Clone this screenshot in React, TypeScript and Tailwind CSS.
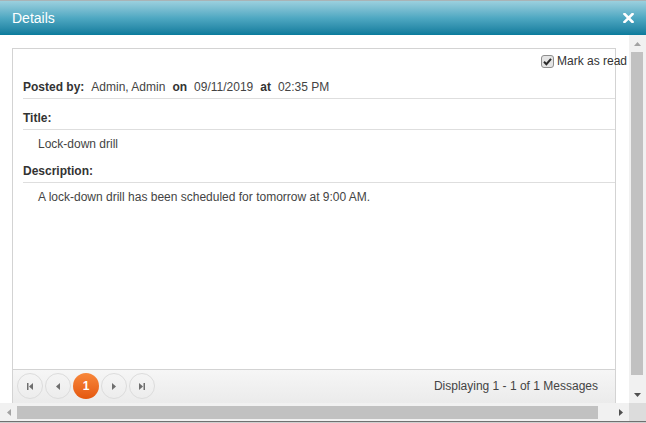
import React from 'react';

function Tri({ dir, color }: { dir: 'up' | 'down' | 'left' | 'right'; color: string }) {
    const pts = {
        up: '0,4 7,4 3.5,0',
        down: '0,0 7,0 3.5,4',
        left: '4,0 4,7 0,3.5',
        right: '0,0 0,7 4,3.5',
    }[dir];
    const w = dir === 'up' || dir === 'down' ? 7 : 4;
    const h = dir === 'up' || dir === 'down' ? 4 : 7;
    return (
        <svg width={w} height={h} viewBox={`0 0 ${w} ${h}`}>
            <polygon points={pts} fill={color} />
        </svg>
    );
}

function PagerIcon({ kind }: { kind: 'first' | 'prev' | 'next' | 'last' }) {
    const c = '#6e6e6e';
    return (
        <svg width="10" height="9" viewBox="0 0 10 9">
            {kind === 'first' && (
                <>
                    <rect x="2" y="1" width="1.5" height="7" fill={c} />
                    <polygon points="8,1 8,8 4,4.5" fill={c} />
                </>
            )}
            {kind === 'prev' && <polygon points="7,1 7,8 3,4.5" fill={c} />}
            {kind === 'next' && <polygon points="3,1 3,8 7,4.5" fill={c} />}
            {kind === 'last' && (
                <>
                    <polygon points="2,1 2,8 6,4.5" fill={c} />
                    <rect x="6.5" y="1" width="1.5" height="7" fill={c} />
                </>
            )}
        </svg>
    );
}

function PagerBtn({ kind }: { kind: 'first' | 'prev' | 'next' | 'last' }) {
    return (
        <div className="w-[26px] h-[26px] rounded-full border border-[#dcdcdc] flex items-center justify-center">
            <PagerIcon kind={kind} />
        </div>
    );
}

export default function App() {
    return (
        <div className="w-[646px] h-[423px] flex flex-col bg-white overflow-hidden font-['Liberation_Sans',Arial,sans-serif] text-[12px] text-[#333]">
            {/* title bar */}
            <div className="h-[35px] shrink-0 flex items-center justify-between pl-[12px] pr-[12px] border-t border-[#a9b3b6] bg-linear-to-b from-[#9bd0de] via-[#4ea8c2] to-[#087b9c]">
                <span className="text-white text-[14px] leading-none">Details</span>
                <svg width="11" height="10" viewBox="0 0 11 10">
                    <path d="M1.5 1 L9.5 9 M9.5 1 L1.5 9" stroke="#fff" strokeWidth="2.6" strokeLinecap="square" />
                </svg>
            </div>

            {/* body */}
            <div className="flex flex-1 min-h-0">
                <div className="flex-1 overflow-hidden pl-[12px] pt-[13px]">
                    <div className="w-[604px] border border-[#d3d3d3]">
                        <div className="h-[320px] pl-[10px]">
                            <div className="flex justify-end items-center gap-[3px] pt-[6px] -mr-[12px]">
                                <svg width="13" height="13" viewBox="0 0 13 13">
                                    <rect x="0.5" y="0.5" width="12" height="12" rx="2.5" fill="#e4e4e4" stroke="#8e8e8e" />
                                    <path d="M3 6.8 L5.4 9.2 L10 3.8" stroke="#2b2b2b" strokeWidth="2" fill="none" />
                                </svg>
                                <span className="leading-[13px] text-[#333]">Mark as read</span>
                            </div>
                            <div className="mt-[12px] pb-[4px] leading-[14px] border-b border-[#dedede] flex gap-[7px] whitespace-nowrap">
                                <span className="font-bold">Posted by:</span>
                                <span className="text-[#444]">Admin, Admin</span>
                                <span className="font-bold">on</span>
                                <span className="text-[#444]">09/11/2019</span>
                                <span className="font-bold">at</span>
                                <span className="text-[#444]">02:35 PM</span>
                            </div>
                            <div className="mt-[12px] pb-[4px] leading-[14px] border-b border-[#dedede] font-bold">Title:</div>
                            <div className="mt-[7px] pl-[15px] leading-[14px] text-[#444]">Lock-down drill</div>
                            <div className="mt-[13px] pb-[4px] leading-[14px] border-b border-[#dedede] font-bold">Description:</div>
                            <div className="mt-[7px] pl-[15px] leading-[14px] text-[#444]">
                                A lock-down drill has been scheduled for tomorrow at 9:00 AM.
                            </div>
                        </div>
                        {/* pager */}
                        <div className="h-[40px] border-t border-[#d3d3d3] bg-linear-to-b from-[#f6f6f6] to-[#e9e9e9] flex items-start pt-[3px] pl-[4px] pr-[17px]">
                            <div className="flex items-center gap-[2px]">
                                <PagerBtn kind="first" />
                                <PagerBtn kind="prev" />
                                <div className="w-[26px] h-[26px] rounded-full bg-linear-to-b from-[#f8873a] to-[#e4570b] flex items-center justify-center text-white font-bold text-[12px]">
                                    1
                                </div>
                                <PagerBtn kind="next" />
                                <PagerBtn kind="last" />
                            </div>
                            <span className="ml-auto mt-[6px] leading-[14px] text-[#444]">Displaying 1 - 1 of 1 Messages</span>
                        </div>
                    </div>
                </div>

                {/* vertical scrollbar */}
                <div className="w-[17px] shrink-0 bg-[#f1f1f1] flex flex-col">
                    <div className="h-[17px] flex items-center justify-center">
                        <Tri dir="up" color="#a3a3a3" />
                    </div>
                    <div className="h-[323px] ml-[2px] w-[12px] bg-[#c1c1c1]" />
                    <div className="flex-1 flex items-end">
                        <div className="h-[17px] w-full flex items-center justify-center">
                            <Tri dir="down" color="#505050" />
                        </div>
                    </div>
                </div>
            </div>

            {/* horizontal scrollbar */}
            <div className="h-[18px] shrink-0 flex">
                <div className="flex-1 bg-[#f1f1f1] flex">
                    <div className="w-[17px] flex items-center justify-center">
                        <Tri dir="left" color="#a3a3a3" />
                    </div>
                    <div className="w-[581px] h-[13px] mt-[3px] bg-[#c1c1c1]" />
                    <div className="flex-1 flex justify-end">
                        <div className="w-[17px] flex items-center justify-center">
                            <Tri dir="right" color="#505050" />
                        </div>
                    </div>
                </div>
                <div className="w-[17px] bg-[#dcdcdc]" />
            </div>
            <div className="h-[2px] shrink-0 border-t border-[#707070] bg-[#cfcfcf]" />
        </div>
    );
}
